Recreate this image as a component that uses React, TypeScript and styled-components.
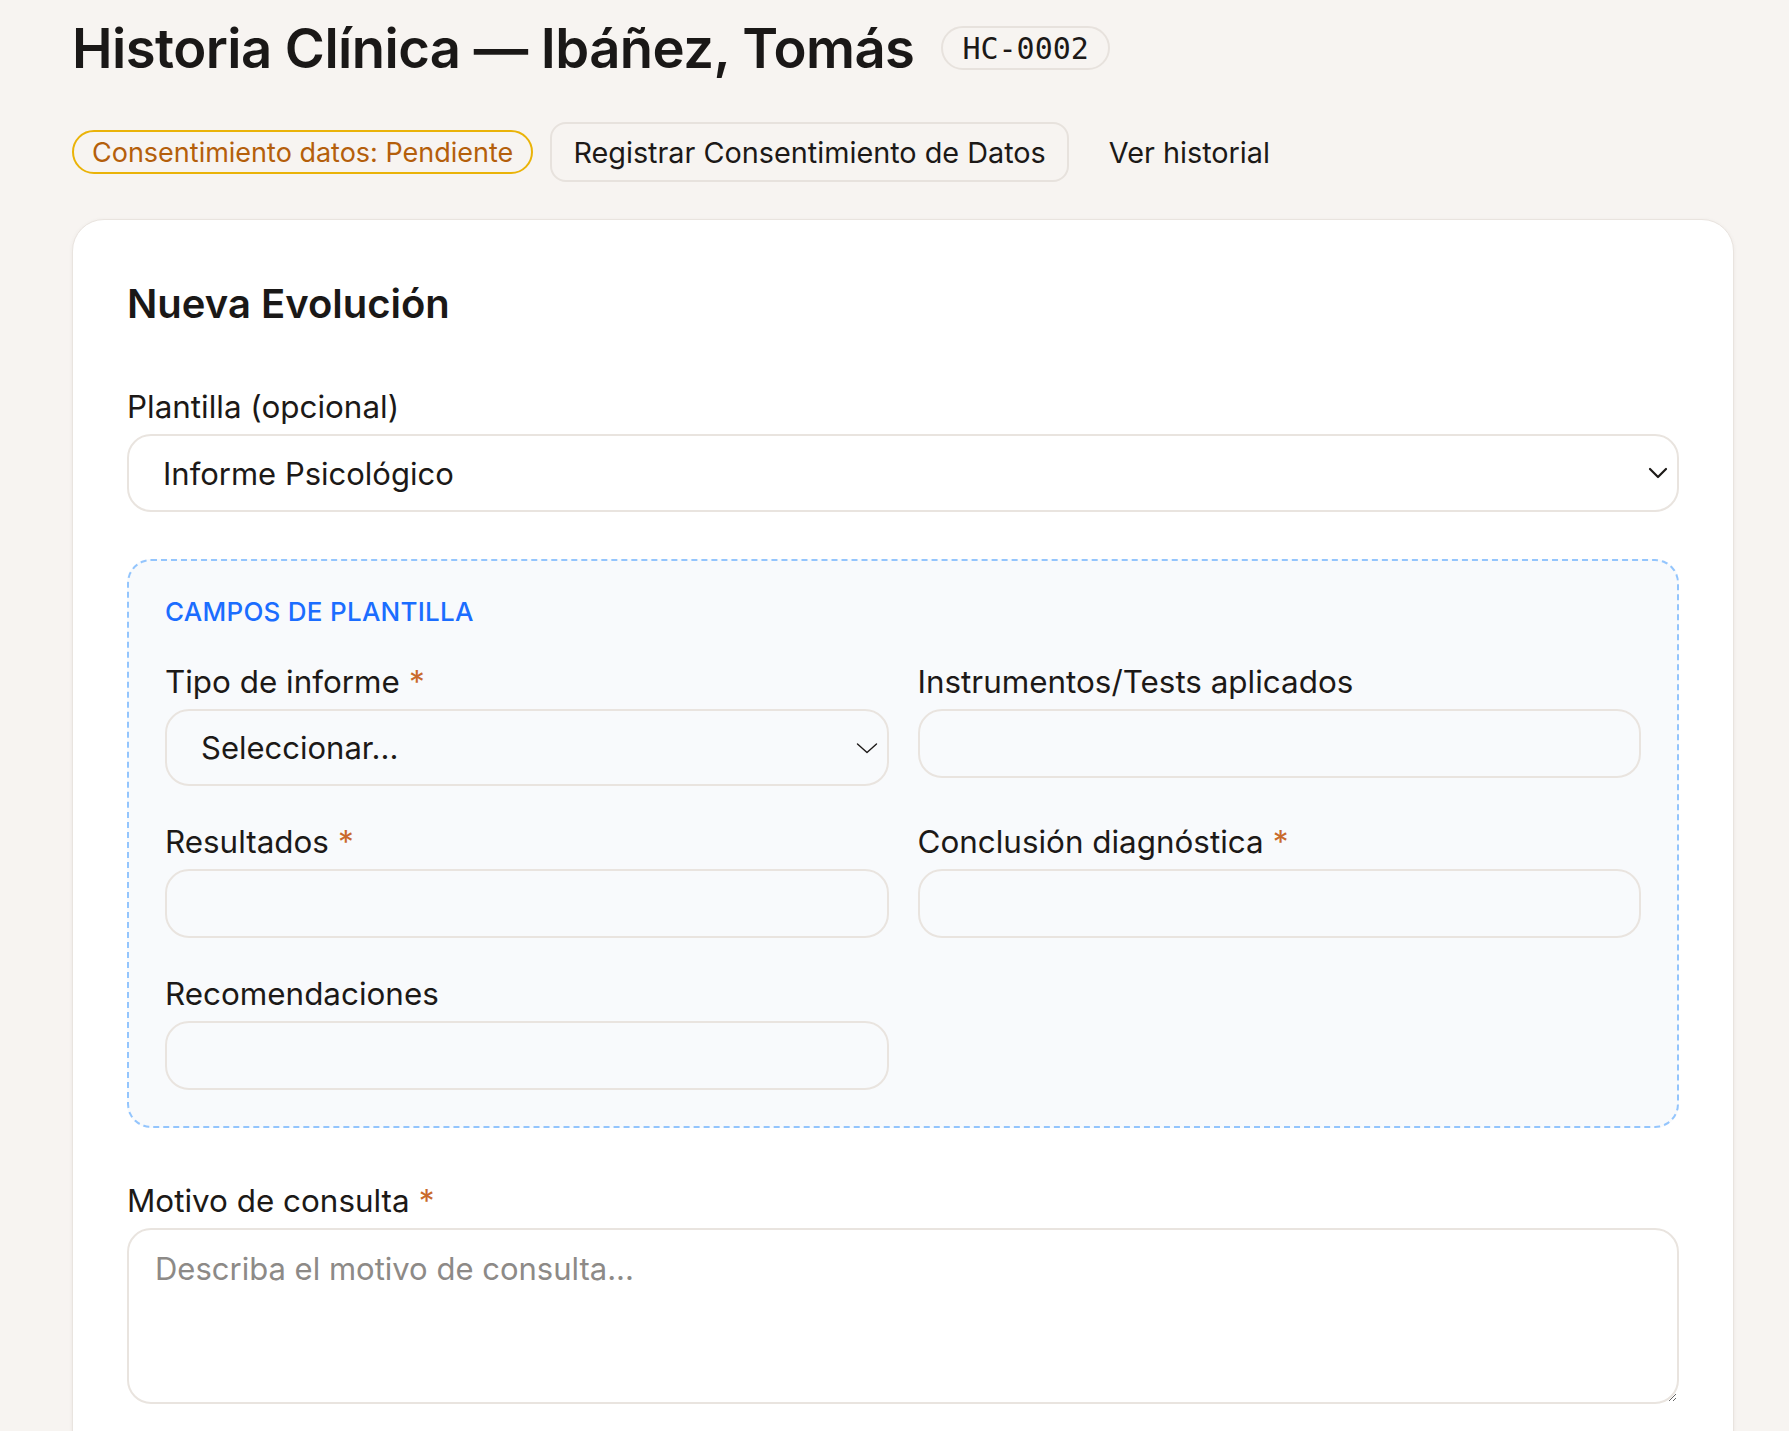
import React from "react";
import styled, { createGlobalStyle } from "styled-components";

const GlobalStyle = createGlobalStyle`
  * { box-sizing: border-box; }
  html, body {
    margin: 0;
    padding: 0;
    background: #f7f4f1;
  }
  body {
    font-family: Inter, "Noto Sans", "Liberation Sans", sans-serif;
    color: #1c1917;
    -webkit-font-smoothing: antialiased;
  }
`;

const Page = styled.div`
  padding: 17px 55px 40px 72px;
`;

const Header = styled.header`
  display: flex;
  align-items: center;
  gap: 27px;
  height: 62px;
`;

const Title = styled.h1`
  margin: 0;
  font-size: 54.4px;
  line-height: 62px;
  font-weight: 600;
  letter-spacing: -0.01em;
  color: #1a1817;
`;

const IdBadge = styled.span`
  display: inline-flex;
  align-items: center;
  height: 44px;
  padding: 0 19px;
  border: 2px solid #e7e2dd;
  border-radius: 999px;
  font-family: "DejaVu Sans Mono", "Liberation Mono", monospace;
  font-size: 30px;
  color: #1c1917;
`;

const Actions = styled.div`
  display: flex;
  align-items: center;
  gap: 17px;
  margin-top: 43px;
`;

const StatusPill = styled.span`
  display: inline-flex;
  align-items: center;
  height: 44px;
  padding: 0 18px;
  border: 2px solid #eab308;
  border-radius: 999px;
  color: #b45f0b;
  font-size: 27px;
  font-weight: 400;
`;

const Button = styled.button<{ $ghost?: boolean }>`
  display: inline-flex;
  align-items: center;
  height: 60px;
  padding: 0 21px;
  border: 2px solid ${(p) => (p.$ghost ? "transparent" : "#e7e2dd")};
  border-radius: 16px;
  background: transparent;
  color: #1c1917;
  font-family: inherit;
  font-size: 28.8px;
  font-weight: 400;
  cursor: pointer;
`;

const Card = styled.section`
  margin-top: 37px;
  background: #ffffff;
  border: 1px solid #e9e4df;
  border-radius: 32px;
  box-shadow: 0 1px 4px rgba(60, 40, 20, 0.06);
  padding: 60px 54px 60px;
`;

const CardTitle = styled.h2`
  margin: 0;
  font-size: 40px;
  line-height: 48px;
  font-weight: 600;
  color: #1a1817;
`;

const Field = styled.div<{ $top?: number }>`
  display: flex;
  flex-direction: column;
  gap: 6px;
  margin-top: ${(p) => p.$top ?? 0}px;
`;

const Label = styled.label`
  font-size: 31.4px;
  line-height: 42px;
  font-weight: 400;
  color: #1c1917;
`;

const Req = styled.span`
  color: #c96a2b;
  margin-left: 9px;
`;

const SelectWrap = styled.div`
  position: relative;
`;

const Select = styled.select<{ $h: number; $bg: string }>`
  appearance: none;
  -webkit-appearance: none;
  width: 100%;
  height: ${(p) => p.$h}px;
  padding: 0 60px 0 34px;
  border: 2px solid #e9e4df;
  border-radius: 24px;
  background: ${(p) => p.$bg};
  font-family: inherit;
  font-size: 31px;
  color: #1c1917;
  outline: none;
`;

const Chevron = styled.svg`
  position: absolute;
  right: 11px;
  top: 50%;
  transform: translateY(-50%);
  pointer-events: none;
`;

const TemplateBox = styled.div`
  margin-top: 47px;
  border: 2px dashed #93c5fd;
  border-radius: 24px;
  background: #f8fafc;
  padding: 32px 36px 36px;
`;

const BoxTitle = styled.div`
  font-size: 26px;
  line-height: 37px;
  font-weight: 500;
  color: #1b6dff;
  text-transform: uppercase;
  letter-spacing: 0.01em;
  margin-bottom: 31px;
`;

const Grid = styled.div`
  display: grid;
  grid-template-columns: 1fr 1fr;
  column-gap: 29px;
  row-gap: 35px;
  align-items: start;
`;

const Input = styled.input`
  width: 100%;
  height: 69px;
  padding: 0 28px;
  border: 2px solid #e9e4df;
  border-radius: 24px;
  background: transparent;
  font-family: inherit;
  font-size: 31px;
  color: #1c1917;
  outline: none;
`;

const TextArea = styled.textarea`
  width: 100%;
  height: 176px;
  padding: 18px 26px;
  border: 2px solid #e9e4df;
  border-radius: 24px;
  background: #ffffff;
  font-family: inherit;
  font-size: 31px;
  line-height: 42px;
  color: #1c1917;
  resize: vertical;
  outline: none;
  &::placeholder {
    color: #8d8a87;
  }
`;

function ChevronIcon({ bold }: { bold?: boolean }) {
  return bold ? (
    <Chevron width="20" height="12" viewBox="0 0 20 12" fill="none">
      <path d="M2 2l8 8 8-8" stroke="#1c1917" strokeWidth="2.2" strokeLinecap="round" strokeLinejoin="round" />
    </Chevron>
  ) : (
    <Chevron width="22" height="12" viewBox="0 0 22 12" fill="none">
      <path d="M1.5 2l9.5 8.5L20.5 2" stroke="#1c1917" strokeWidth="1.4" strokeLinecap="round" strokeLinejoin="round" />
    </Chevron>
  );
}

export default function App() {
  return (
    <>
      <GlobalStyle />
      <Page>
        <Header>
          <Title>Historia Clínica — Ibáñez, Tomás</Title>
          <IdBadge>HC-0002</IdBadge>
        </Header>

        <Actions>
          <StatusPill>Consentimiento datos: Pendiente</StatusPill>
          <Button>Registrar Consentimiento de Datos</Button>
          <Button $ghost>Ver historial</Button>
        </Actions>

        <Card>
          <CardTitle>Nueva Evolución</CardTitle>

          <Field $top={58}>
            <Label>Plantilla (opcional)</Label>
            <SelectWrap>
              <Select $h={78} $bg="#ffffff" defaultValue="psico">
                <option value="">Sin plantilla</option>
                <option value="psico">Informe Psicológico</option>
              </Select>
              <ChevronIcon bold />
            </SelectWrap>
          </Field>

          <TemplateBox>
            <BoxTitle>Campos de plantilla</BoxTitle>
            <Grid>
              <Field>
                <Label>
                  Tipo de informe<Req>*</Req>
                </Label>
                <SelectWrap>
                  <Select $h={77} $bg="transparent" defaultValue="">
                    <option value="">Seleccionar...</option>
                  </Select>
                  <ChevronIcon />
                </SelectWrap>
              </Field>
              <Field>
                <Label>Instrumentos/Tests aplicados</Label>
                <Input />
              </Field>
              <Field>
                <Label>
                  Resultados<Req>*</Req>
                </Label>
                <Input />
              </Field>
              <Field>
                <Label>
                  Conclusión diagnóstica<Req>*</Req>
                </Label>
                <Input />
              </Field>
              <Field>
                <Label>Recomendaciones</Label>
                <Input />
              </Field>
            </Grid>
          </TemplateBox>

          <Field $top={52}>
            <Label>
              Motivo de consulta<Req>*</Req>
            </Label>
            <TextArea placeholder="Describa el motivo de consulta..." />
          </Field>
        </Card>
      </Page>
    </>
  );
}
